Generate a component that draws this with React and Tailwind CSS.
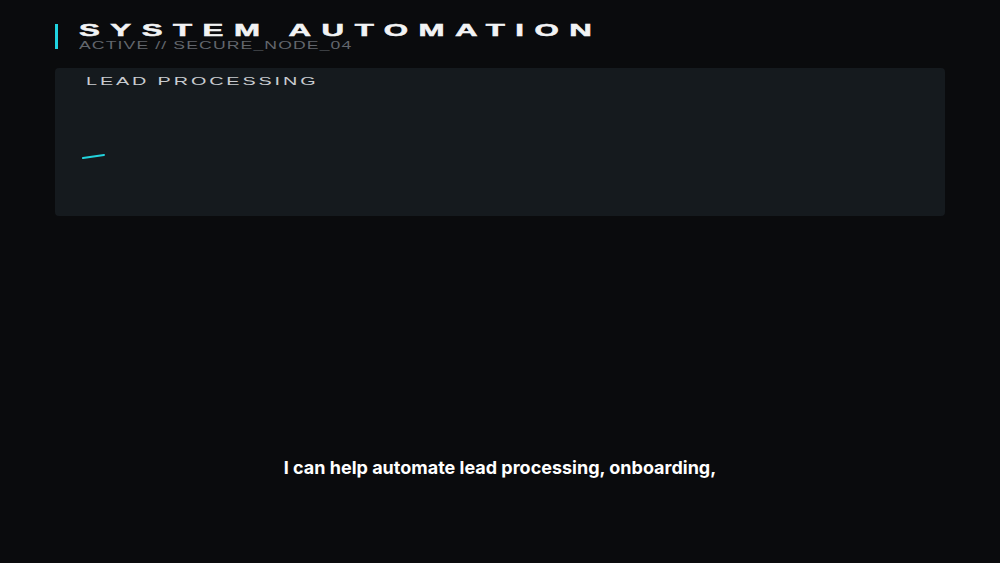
const App = () => {
  return (
    <div className="w-[1000px] h-[563px] bg-[#0a0b0d] flex flex-col px-[55px] pt-[23px] overflow-hidden">
      <div className="flex items-stretch gap-[21px]">
        <div className="w-[3px] bg-[#1fd3e0] my-[1px]" />
        <div className="flex flex-col">
          <div
            className="origin-left scale-x-[1.95] text-[16px] leading-[16px] font-bold tracking-[5.4px] text-[#f2f3f4] whitespace-nowrap [-webkit-text-stroke:0.5px_#f2f3f4]"
            style={{ fontFamily: '"Liberation Sans", Arial, sans-serif' }}
          >
            SYSTEM AUTOMATION
          </div>
          <div
            className="origin-left scale-x-[1.6] mt-[1px] text-[11px] leading-[10px] tracking-[0.7px] text-[#62666c] whitespace-nowrap"
            style={{ fontFamily: '"Liberation Sans", Arial, sans-serif' }}
          >
            ACTIVE // SECURE_NODE_04
          </div>
        </div>
      </div>

      <div className="mt-[18px] h-[148px] w-[890px] rounded-[4px] bg-[#151a1e] relative">
        <div
          className="absolute left-[31px] top-[7px] origin-left scale-x-[1.8] text-[11px] leading-[12px] tracking-[1.6px] text-[#c9ccd0] whitespace-nowrap"
          style={{ fontFamily: '"Liberation Sans", Arial, sans-serif' }}
        >
          LEAD PROCESSING
        </div>
        <svg className="absolute left-[26px] top-[84px]" width="26" height="8" viewBox="0 0 26 8">
          <line x1="2" y1="6" x2="23" y2="3" stroke="#22d3dd" strokeWidth="2" strokeLinecap="round" />
        </svg>
      </div>

      <div className="flex-1 flex items-end justify-center pb-[84px]">
        <p
          className="text-[18px] leading-[22px] font-bold text-white"
          style={{ fontFamily: 'Inter, "Noto Sans", sans-serif' }}
        >
          I can help automate lead processing, onboarding,
        </p>
      </div>
    </div>
  );
};

export default App;
